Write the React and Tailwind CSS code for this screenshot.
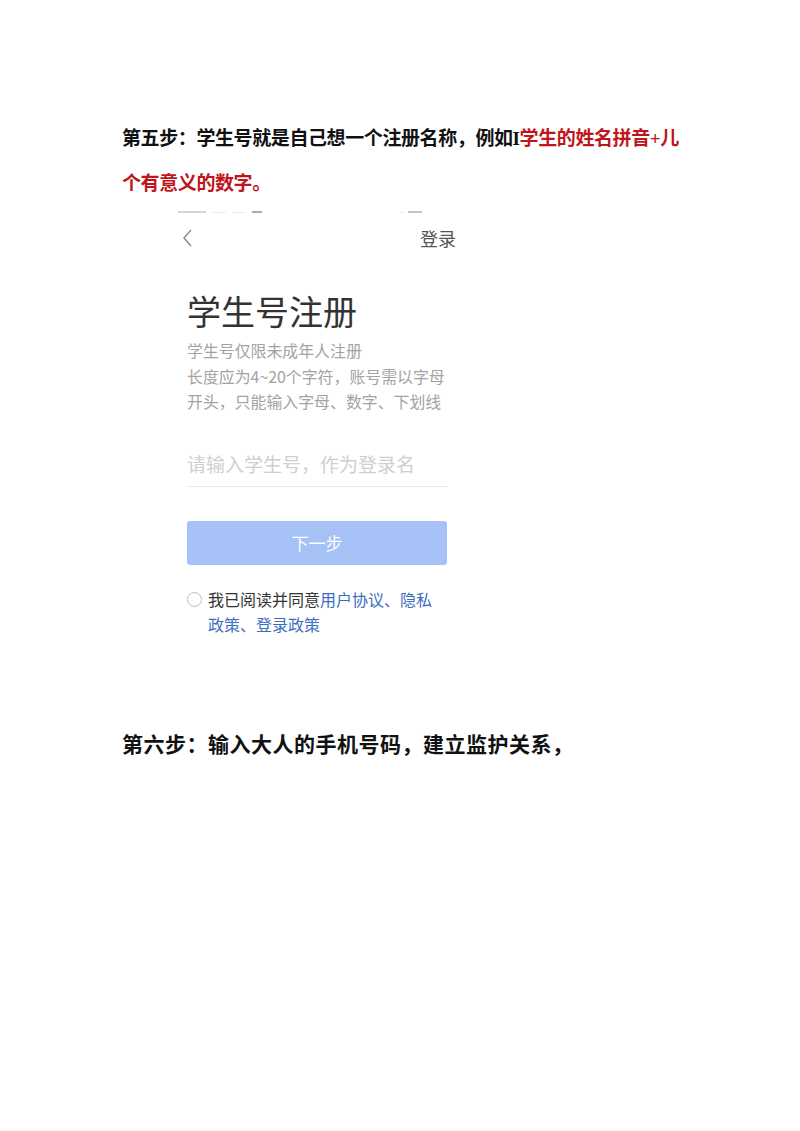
import React from 'react';

const serif = { fontFamily: '"Liberation Serif", "Noto Sans CJK SC", serif' };

const PhoneShot = () => (
  <div className="ml-[48px] w-[300px] bg-white" style={{ fontFamily: '"Noto Sans CJK SC", sans-serif' }}>
    {/* cut-off status bar */}
    <div className="h-[10px] flex items-start justify-between px-[8px] pt-[3px]">
      <div className="flex items-center gap-[6px]">
        <div className="w-[28px] h-[2px] bg-[#d6d6d6]" />
        <div className="w-[14px] h-[1px] bg-[#ececec]" />
        <div className="w-[14px] h-[1px] bg-[#ececec]" />
        <div className="w-[10px] h-[2px] bg-[#8fb3c7]" />
      </div>
      <div className="flex items-center gap-[4px] mr-[40px]">
        <div className="w-[4px] h-[1px] bg-[#ececec]" />
        <div className="w-[14px] h-[2px] bg-[#c4c4c4]" />
      </div>
    </div>
    {/* nav */}
    <div className="h-[40px] flex items-center justify-between pl-[11px] pr-[14px]">
      <svg width="12" height="20" viewBox="0 0 12 20" fill="none" stroke="#8a8a8a" strokeWidth="1.4">
        <path d="M10 2 L3 10 L10 18" />
      </svg>
      <span className="text-[18px] text-[#555] leading-none">登录</span>
    </div>
    <div className="pl-[17px]">
      <div className="mt-[33px] text-[34px] leading-[40px] text-[#333]">学生号注册</div>
      <div className="mt-[7px] text-[15.9px] leading-[25.5px] text-[#a3a3a3] whitespace-nowrap">
        <div>学生号仅限未成年人注册</div>
        <div>长度应为4~20个字符，账号需以字母</div>
        <div>开头，只能输入字母、数字、下划线</div>
      </div>
      <div className="mt-[36px] w-[260px] border-b border-[#e8e8e8] pb-[9px] text-[19px] leading-[26px] text-[#cfcfcf]">
        请输入学生号，作为登录名
      </div>
      <div className="mt-[34px] w-[260px] h-[44px] rounded-[3px] bg-[#a6c1f6] flex items-center justify-center text-white text-[17px]">
        下一步
      </div>
      <div className="mt-[22px] flex items-start gap-[6px] text-[16px] leading-[25px]">
        <div className="mt-[5px] w-[15px] h-[15px] rounded-full border border-[#bdbdbd] shrink-0" />
        <div className="text-[#333] w-[232px]">
          我已阅读并同意<span className="text-[#3d6fbf]">用户协议、隐私<br />政策、登录政策</span>
        </div>
      </div>
    </div>
  </div>
);

export default function App() {
  return (
    <div className="w-[800px] h-[1131px] bg-white pl-[122px] pt-[116px]" style={serif}>
      <div className="text-[19px] tracking-[-0.4px] leading-[45px] font-bold text-[#111] whitespace-nowrap">
        第五步：学生号就是自己想一个注册名称，例如I<span className="text-[#c0151c]">学生的姓名拼音+儿<br />个有意义的数字。</span>
      </div>
      <div className="mt-[2px]">
        <PhoneShot />
      </div>
      <div className="mt-[86px] text-[21px] tracking-[0.5px] leading-[45px] font-bold text-[#111]">
        第六步：输入大人的手机号码，建立监护关系，
      </div>
    </div>
  );
}
